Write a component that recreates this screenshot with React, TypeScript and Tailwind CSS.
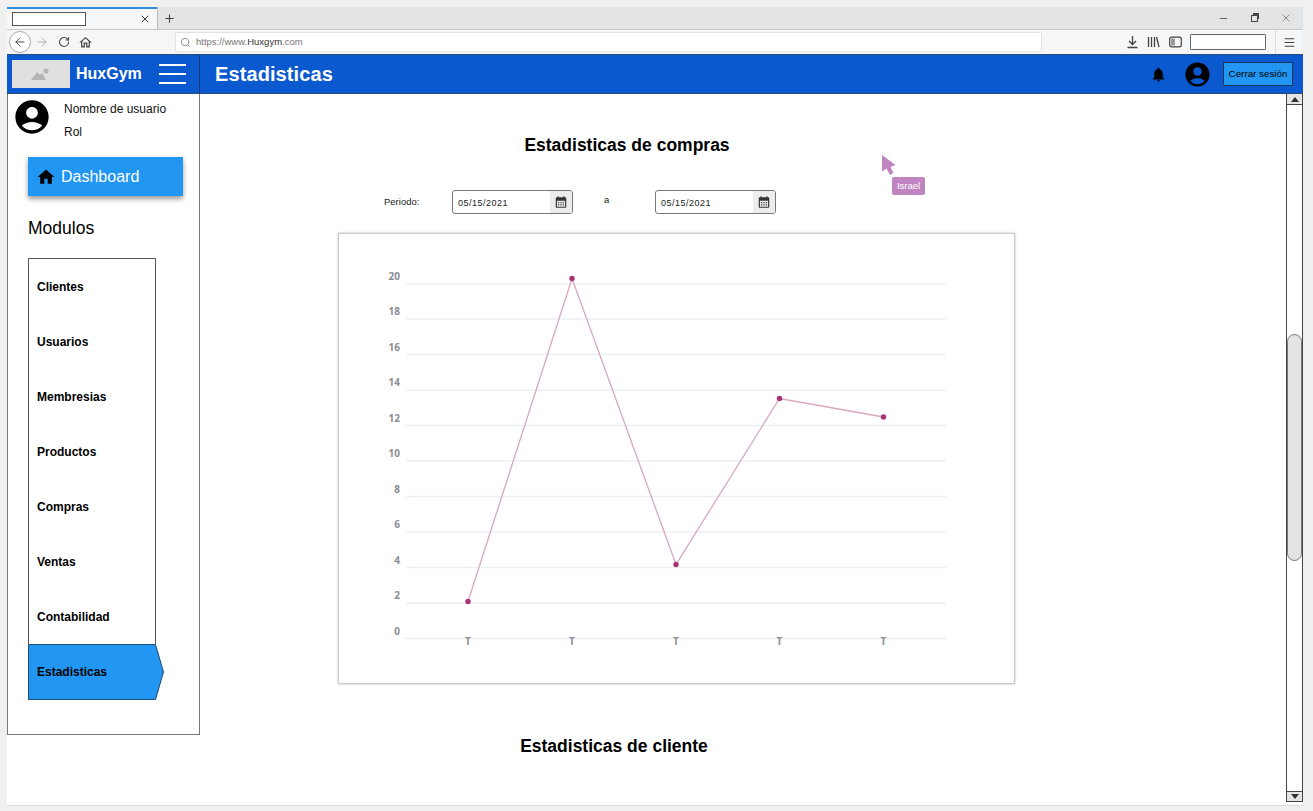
import React from 'react';
import { ArrowLeft, ArrowRight, Menu, Minus, Plus, RotateCw, Search, X } from 'lucide-react';
import { MdAccountCircle, MdCalendarMonth, MdHome, MdNotifications, MdOutlineHome } from 'react-icons/md';

const modules = ['Clientes', 'Usuarios', 'Membresias', 'Productos', 'Compras', 'Ventas', 'Contabilidad'];
const gridLines = [
    { label: '20', y: 284 },
    { label: '18', y: 319 },
    { label: '16', y: 354.5 },
    { label: '14', y: 390 },
    { label: '12', y: 425.5 },
    { label: '10', y: 461 },
    { label: '8', y: 496.5 },
    { label: '6', y: 532 },
    { label: '4', y: 567.5 },
    { label: '2', y: 603 },
    { label: '0', y: 638.5 },
];
const points = [
    { x: 468, y: 601.5 },
    { x: 572, y: 278.5 },
    { x: 676, y: 564.5 },
    { x: 779.5, y: 398.5 },
    { x: 883.5, y: 417 },
];

function DateField() {
    return (
        <div className="flex h-[24px] w-[121px] items-stretch overflow-hidden rounded-[3px] border border-[#777] bg-white">
            <span className="flex-1 pl-[5px] text-[9px] leading-[24px] tracking-[0.5px] text-[#222]">05/15/2021</span>
            <span className="flex w-[22px] items-center justify-center bg-[#ececec] text-[#333]">
                <MdCalendarMonth size={14} />
            </span>
        </div>
    );
}

function BrowserChrome() {
    return (
        <>
            <div className="flex h-[23px] items-stretch border-b border-[#c9cacc] bg-[#e3e4e6]">
                <div className="flex w-[150px] items-center border-t-2 border-[#2a8be0] bg-[#f5f6f7] pl-[5px] pr-[6px]">
                    <div className="h-[14px] w-[74px] border border-[#555] bg-white" />
                    <X size={12} strokeWidth={1.8} className="ml-auto text-[#222]" />
                </div>
                <div className="flex w-[24px] items-center justify-center border-l border-[#bbb]">
                    <Plus size={13} className="text-[#444]" />
                </div>
                <div className="ml-auto flex items-center pr-[11px] text-[#555]">
                    <Minus size={11} />
                    <span className="relative ml-[22px] block h-[7px] w-[7px] border border-[#444] bg-[#e3e4e6] after:absolute after:left-[1px] after:top-[-3px] after:h-[6px] after:w-[6px] after:border-t-2 after:border-r after:border-[#444]" />
                    <X size={12} strokeWidth={1.2} className="ml-[22px]" />
                </div>
            </div>
            <div className="flex h-[24px] items-center bg-[#f5f6f7] pl-[2px] text-[#444]">
                <span className="flex h-[22px] w-[22px] items-center justify-center rounded-full border border-[#aaa] bg-white">
                    <ArrowLeft size={14} strokeWidth={1.6} />
                </span>
                <ArrowRight size={14} strokeWidth={1.6} className="ml-[4px] text-[#aaa]" />
                <RotateCw size={12} strokeWidth={2.2} className="ml-[9px]" />
                <MdOutlineHome size={15} className="ml-[8px]" />
                <div className="ml-[82px] flex h-[20px] w-[867px] items-center rounded-[2px] border border-[#e2e2e2] bg-white pl-[4px]">
                    <Search size={11} className="text-[#888]" />
                    <span className="ml-[5px] text-[9.5px] text-[#777]">
                        https://www.<span className="text-[#333]">Huxgym</span>.com
                    </span>
                </div>
                <svg width="13" height="14" viewBox="0 0 13 14" fill="none" stroke="#444" strokeWidth="1.3" className="ml-[84px]">
                    <path d="M6.5 1V9M3 6L6.5 9.5L10 6M1.5 12.5H11.5" />
                </svg>
                <svg width="13" height="12" viewBox="0 0 13 12" fill="none" stroke="#444" strokeWidth="1.3" className="ml-[8px]">
                    <path d="M1.5 1V11M4.5 1V11M7.5 1V11M9.5 1L12 11" />
                </svg>
                <svg width="13" height="12" viewBox="0 0 13 12" className="ml-[9px]">
                    <rect x="0.7" y="1.2" width="11.6" height="9.6" rx="2" fill="none" stroke="#444" strokeWidth="1.2" />
                    <rect x="2" y="2.5" width="4" height="7" fill="#999" />
                </svg>
                <div className="ml-[8px] h-[16px] w-[76px] rounded-[1px] border border-[#666] bg-white" />
                <div className="ml-[9px] h-[24px] border-l border-[#ddd]" />
                <Menu size={13} className="ml-[7px]" />
            </div>
        </>
    );
}

function Header() {
    return (
        <header className="flex h-[40px] shrink-0 border-y border-[#2c4a78] bg-[#0b59cf] text-white">
            <div className="flex w-[193px] items-center border-r border-[#1b3a6b] pl-[5px]">
                <div className="flex h-[28px] w-[58px] items-center justify-center bg-[#e0e0e0]">
                    <svg width="20" height="12" viewBox="0 0 20 12" fill="#b5b5b5">
                        <path d="M0 12 L6 4 L9 7 L11 5 L15 12 Z" />
                        <circle cx="15" cy="3" r="2.5" />
                    </svg>
                </div>
                <span className="ml-[6px] text-[16px] font-bold">HuxGym</span>
                <div className="ml-[17px] flex w-[27px] flex-col gap-[7px]">
                    <span className="h-[2px] bg-white" />
                    <span className="h-[2px] bg-white" />
                    <span className="h-[2px] bg-white" />
                </div>
            </div>
            <h1 className="ml-[15px] self-center text-[20px] font-bold tracking-[0.1px]">Estadisticas</h1>
            <div className="ml-auto flex items-center pr-[10px] text-black">
                <MdNotifications size={17} />
                <MdAccountCircle size={29} className="ml-[16px]" />
                <button className="ml-[11px] h-[24px] w-[70px] border border-[#14365f] bg-[#2196f3] pt-[1px] text-[9.8px] text-black">
                    Cerrar sesión
                </button>
            </div>
        </header>
    );
}

function Sidebar() {
    return (
        <aside className="h-[641px] w-[193px] shrink-0 border-x border-b border-[#777] bg-white">
            <div className="flex pl-[4px] pt-[3px]">
                <MdAccountCircle size={40} className="text-black" />
                <div className="ml-[12px] pt-[1px] text-[12px] leading-[23px] text-[#111]">
                    <div>Nombre de usuario</div>
                    <div>Rol</div>
                </div>
            </div>
            <div className="ml-[20px] mt-[13px] flex h-[39px] w-[155px] items-center bg-[#2196f3] pl-[8px] pt-[1px] text-[16px] text-white shadow-[0_3px_5px_rgba(0,0,0,0.4)]">
                <MdHome size={20} className="text-black" />
                <span className="ml-[5px]">Dashboard</span>
            </div>
            <div className="ml-[20px] mt-[19px] text-[17.5px] text-black">Modulos</div>
            <div className="ml-[20px] mt-[17px]">
                <div className="w-[128px] border-x border-t border-[#555]">
                    {modules.map((name) => (
                        <div key={name} className="flex h-[55px] items-center pl-[8px] text-[12px] font-bold text-black">
                            {name}
                        </div>
                    ))}
                </div>
                <div className="relative flex h-[56px] w-[136px] items-center pl-[9px] text-[12px] font-bold text-black">
                    <svg className="absolute inset-0" width="136" height="56" viewBox="0 0 136 56">
                        <path d="M0.5 0.5 H127.5 L135.5 28 L127.5 55.5 H0.5 Z" fill="#2196f3" stroke="#1f4a70" />
                    </svg>
                    <span className="relative">Estadisticas</span>
                </div>
            </div>
        </aside>
    );
}

function Chart() {
    return (
        <div className="ml-[138px] mt-[19px] h-[451px] w-[677px] border border-[#ccc] bg-white shadow-[0_0_2px_rgba(0,0,0,0.3)]">
            <svg width="675" height="449" viewBox="339 234 675 449" className="block">
                {gridLines.map((line) => (
                    <g key={line.label}>
                        <line x1={line.label === '0' ? 403 : 406} x2="946" y1={line.y} y2={line.y} stroke="#ebf0f6" strokeWidth="1.3" />
                        <text x="400" y={line.y - 4} textAnchor="end" fontSize="10" fontWeight="700" fill="#8a8d93" fontFamily="'Open Sans', sans-serif">
                            {line.label}
                        </text>
                    </g>
                ))}
                <polyline points={points.map((p) => `${p.x},${p.y}`).join(' ')} fill="none" stroke="#d9a6c2" strokeWidth="1.3" />
                {points.map((p) => (
                    <g key={p.x}>
                        <circle cx={p.x} cy={p.y} r="2.7" fill="#a93375" />
                        <text x={p.x} y="645" textAnchor="middle" fontSize="10" fontWeight="700" fill="#8a8d93" fontFamily="'Open Sans', sans-serif">
                            T
                        </text>
                    </g>
                ))}
            </svg>
        </div>
    );
}

function MainContent() {
    return (
        <main className="relative min-w-0 flex-1 overflow-hidden bg-white">
            <h2 className="mt-[40px] w-[854px] text-center text-[17.5px] font-bold leading-[22px] text-black">Estadisticas de compras</h2>
            <div className="ml-[184px] mt-[34px] flex h-[24px] items-center text-[9.5px] text-[#222]">
                <span className="w-[68px]">Periodo:</span>
                <DateField />
                <span className="ml-[31px] mb-[3px] w-[51px]">a</span>
                <DateField />
            </div>
            <Chart />
            <h2 className="mt-[51px] w-[828px] text-center text-[17.5px] font-bold leading-[22px] text-black">Estadisticas de cliente</h2>

            {/* collaborator cursor */}
            <div className="absolute left-[682px] top-[61px]">
                <svg width="14" height="20" viewBox="0 0 14 20" fill="#c084c0">
                    <path d="M0 0 L13.5 10 L8.5 12 L11.5 18 L8 20 L4.5 13.5 L0 16.5 Z" />
                </svg>
            </div>
            <div className="absolute left-[692px] top-[83px] flex h-[18px] w-[33px] items-center justify-center rounded-[2px] bg-[#c084c0] text-[9.5px] text-white">
                Israel
            </div>
        </main>
    );
}

function Scrollbar() {
    return (
        <div className="flex h-[708px] w-[17px] shrink-0 flex-col border-x border-[#444] bg-white">
            <div className="flex h-[11px] items-center justify-center border-b border-[#444] bg-[#e4e4e4]">
                <span className="h-0 w-0 border-x-[4px] border-b-[5px] border-x-transparent border-b-[#333]" />
            </div>
            <div className="mt-[229px] h-[227px] rounded-[8px] border border-[#777] bg-[#e4e4e4]" />
            <div className="mt-auto flex h-[11px] items-center justify-center border-y border-[#444] bg-[#e4e4e4]">
                <span className="h-0 w-0 border-x-[4px] border-t-[5px] border-x-transparent border-t-[#333]" />
            </div>
        </div>
    );
}

export default function App() {
    return (
        <div className="h-[811px] overflow-hidden bg-[#f0f0f0] p-[7px] font-['Liberation_Sans',sans-serif]">
            <div className="flex h-[799px] w-[1296px] flex-col border-b border-[#ddd] bg-white">
                <BrowserChrome />
                <Header />
                <div className="flex min-h-0 flex-1">
                    <Sidebar />
                    <MainContent />
                    <Scrollbar />
                </div>
            </div>
        </div>
    );
}
